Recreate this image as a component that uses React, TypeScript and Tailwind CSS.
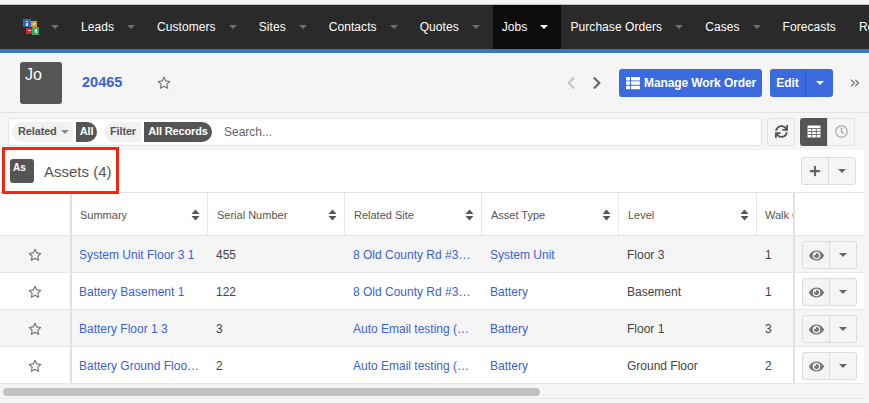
// Work order detail page: top nav, record header, related list toolbar and the Assets table.
import type { ReactNode } from 'react';
import { ChevronsRight } from 'lucide-react';
import { FaChevronLeft, FaChevronRight, FaEye, FaPlus, FaRegClock, FaSync, FaThList } from 'react-icons/fa';

const gridCols = 'grid grid-cols-[72px_136px_137px_137px_137px_138px_36px_71px]';
const linkClass = 'truncate text-[#3b62d8]';

const navItems = [
  { label: 'Leads' },
  { label: 'Customers' },
  { label: 'Sites' },
  { label: 'Contacts' },
  { label: 'Quotes' },
  { label: 'Jobs', active: true },
  { label: 'Purchase Orders' },
  { label: 'Cases' },
];

const headers = ['Summary', 'Serial Number', 'Related Site', 'Asset Type', 'Level'];

const rows = [
  { summary: 'System Unit Floor 3 1', serial: '455', site: '8 Old County Rd #3…', type: 'System Unit', level: 'Floor 3', walk: '1' },
  { summary: 'Battery Basement 1', serial: '122', site: '8 Old County Rd #3…', type: 'Battery', level: 'Basement', walk: '1' },
  { summary: 'Battery Floor 1 3', serial: '3', site: 'Auto Email testing (…', type: 'Battery', level: 'Floor 1', walk: '3' },
  { summary: 'Battery Ground Floo…', serial: '2', site: 'Auto Email testing (…', type: 'Battery', level: 'Ground Floor', walk: '2' },
];

function Caret({ className = 'border-t-[#6f6f6f]' }: { className?: string }) {
  return <span className={`h-0 w-0 shrink-0 border-x-[4px] border-t-[4px] border-x-transparent ${className}`} />;
}

function SortIcon() {
  return (
    <svg width="9" height="12" viewBox="0 0 9 12" className="shrink-0">
      <path d="M4.5 0.5 L8.5 5 H0.5 Z M0.5 7 H8.5 L4.5 11.5 Z" fill="#555" />
    </svg>
  );
}

function StarIcon({ className }: { className?: string }) {
  return (
    <svg width="14" height="14" viewBox="0 0 14 14" className={`shrink-0 ${className ?? ''}`}>
      <path
        d="M7 1.2 L8.75 4.9 L12.8 5.45 L9.85 8.25 L10.6 12.3 L7 10.35 L3.4 12.3 L4.15 8.25 L1.2 5.45 L5.25 4.9 Z"
        fill="none"
        stroke="#707070"
        strokeWidth="1.1"
        strokeLinejoin="round"
      />
    </svg>
  );
}

function GridIcon() {
  return (
    <svg width="14" height="13" viewBox="0 0 14 13">
      <rect x="0.5" y="0.5" width="13" height="12" rx="1" fill="#fff" />
      <path d="M4.7 3.5 V12.5 M9.3 3.5 V12.5 M0.5 3.5 H13.5 M0.5 6.5 H13.5 M0.5 9.5 H13.5" stroke="#555" strokeWidth="0.8" />
    </svg>
  );
}

function Logo() {
  return (
    <svg width="16" height="16" viewBox="0 0 16 16" className="shrink-0">
      <rect x="0" y="0" width="8" height="8" fill="#3569ad" />
      <rect x="3" y="2" width="2" height="1" fill="#cfe0f2" />
      <rect x="3" y="4" width="2" height="3" fill="#cfe0f2" />
      <rect x="8" y="2" width="6" height="6" fill="#d99a35" />
      <rect x="10" y="4" width="2" height="2" fill="#f3d9a8" />
      <rect x="3" y="9" width="6" height="6" fill="#c92a2f" />
      <rect x="5" y="11" width="3" height="1" fill="#f2c6c7" />
      <rect x="9" y="8" width="7" height="8" fill="#45a565" />
      <rect x="12" y="10" width="2" height="4" fill="#c9e8d4" />
    </svg>
  );
}

function NavItem({ label, active }: { label: string; active?: boolean }) {
  return (
    <div className={`flex h-full shrink-0 items-center gap-[13px] pl-[9px] pr-[13px] ${active ? 'bg-[#0c0c0c]' : ''}`}>
      <span>{label}</span>
      <Caret className={active ? 'border-t-white' : 'border-t-[#6f6f6f]'} />
    </div>
  );
}

function SplitButton({ children }: { children: ReactNode }) {
  return (
    <div className="flex h-[28px] w-[55px] rounded-[3px] border border-[#dcdcdc] bg-[#f5f5f5]">
      <div className="flex w-[27px] items-center justify-center border-r border-[#dcdcdc]">{children}</div>
      <div className="flex flex-1 items-center justify-center">
        <Caret className="border-t-[#666]" />
      </div>
    </div>
  );
}

function Pill({ label, value, caret, labelWidth, valueWidth }: { label: string; value: string; caret?: boolean; labelWidth: string; valueWidth: string }) {
  return (
    <div className="flex h-[20px] items-center gap-[3px] text-[11px] font-bold tracking-[-0.15px]">
      <div className={`flex h-full items-center gap-[4px] rounded-l-[10px] bg-[#f1f1f1] pl-[6px] text-[#555] ${labelWidth}`}>
        {label}
        {caret && <Caret className="border-t-[#888]" />}
      </div>
      <div className={`flex h-full items-center justify-center rounded-r-[10px] bg-[#555] text-white ${valueWidth}`}>{value}</div>
    </div>
  );
}

export default function App() {
  return (
    <div className="h-[403px] w-[869px] overflow-hidden bg-[#f5f5f5] font-['Liberation_Sans',sans-serif] text-[12px] text-[#444]">
      <div className="h-[5px] border-b border-[#c4c4c4] bg-[#f5f5f5]" />

      <nav className="flex h-[44px] items-center overflow-hidden bg-[#2a2a2a] pl-[14px] text-[12px] tracking-[0.07px] text-white">
        <div className="flex h-full shrink-0 items-center gap-[12px] pl-[9px] pr-[13px]">
          <Logo />
          <Caret />
        </div>
        {navItems.map((item) => (
          <NavItem key={item.label} label={item.label} active={item.active} />
        ))}
        <span className="ml-[9px] shrink-0">Forecasts</span>
        <span className="ml-[23px] shrink-0">Related</span>
      </nav>
      <div className="h-[4px] bg-[#3a75bd]" />

      <header className="flex h-[60px] items-center border-b border-[#e2e2e2] pl-[20px] pr-[7px]">
        <div className="h-[42px] w-[42px] rounded-[3px] bg-[#555] pl-[5px] pt-[3px] text-[16px] leading-[20px] text-white">Jo</div>
        <span className="ml-[20px] text-[14.5px] font-bold text-[#3b62d8]">20465</span>
        <StarIcon className="ml-[35px]" />
        <div className="ml-auto flex items-center">
          <FaChevronLeft size={14} className="text-[#c4c4c4]" />
          <FaChevronRight size={14} className="ml-[12px] text-[#666]" />
          <button className="ml-[15px] flex h-[28px] w-[143px] items-center gap-[4px] rounded-[3px] bg-[#3a6ade] pl-[7px] text-[12px] font-bold tracking-[-0.1px] text-white">
            <FaThList size={14} />
            Manage Work Order
          </button>
          <div className="ml-[8px] flex h-[28px] w-[63px] rounded-[3px] bg-[#3a6ade] text-[12px] font-bold text-white">
            <span className="flex w-[36px] items-center justify-center border-r border-[#2f58ba]">Edit</span>
            <span className="flex flex-1 items-center justify-center">
              <Caret className="border-t-white" />
            </span>
          </div>
          <ChevronsRight size={14} strokeWidth={2} className="ml-[15px] text-[#6a6a6a]" />
        </div>
      </header>

      <div className="flex h-[37px] items-center pl-[8px] pr-[13px]">
        <div className="flex h-[28px] w-[754px] items-center rounded-[3px] border border-[#e2e2e2] bg-white pl-[3px]">
          <Pill label="Related" value="All" caret labelWidth="w-[61px]" valueWidth="w-[21px]" />
          <div className="ml-[7px]">
            <Pill label="Filter" value="All Records" labelWidth="w-[37px]" valueWidth="w-[68px]" />
          </div>
          <span className="ml-[12px] text-[12px] text-[#666]">Search...</span>
        </div>
        <div className="ml-[5px] flex h-[28px] w-[28px] items-center justify-center rounded-[3px] border border-[#e2e2e2] bg-[#f5f5f5]">
          <FaSync size={13} className="text-[#555]" />
        </div>
        <div className="ml-[5px] flex h-[28px] w-[55px]">
          <div className="flex w-[27px] items-center justify-center rounded-l-[3px] bg-[#555]">
            <GridIcon />
          </div>
          <div className="flex flex-1 items-center justify-center rounded-r-[3px] border border-[#e2e2e2]">
            <FaRegClock size={13} className="text-[#aaa]" />
          </div>
        </div>
      </div>

      <div className="relative w-[864px] bg-white">
        <div className="flex h-[42px] items-center pl-[10px] pr-[8px]">
          <div className="h-[24px] w-[24px] rounded-[3px] bg-[#555] pl-[3px] pt-[1px] text-[10px] font-bold text-white">As</div>
          <span className="ml-[10px] pt-[2px] text-[15px] text-[#555]">Assets (4)</span>
          <div className="ml-auto">
            <SplitButton>
              <FaPlus size={12} className="text-[#666]" />
            </SplitButton>
          </div>
        </div>

        <div className={`${gridCols} h-[44px] border-y border-[#e4e4e4] text-[11px] text-[#555]`}>
          <div className="border-r-2 border-[#e0e0e0]" />
          {headers.map((h, i) => (
            <div key={h} className={`flex items-center justify-between border-r border-[#e8e8e8] pr-[7px] pt-[2px] ${i === 0 ? 'pl-[8px]' : 'pl-[9px]'}`}>
              <span>{h}</span>
              <SortIcon />
            </div>
          ))}
          <div className="overflow-hidden whitespace-nowrap pl-[8px] pt-[1px] leading-[42px]">Walk Order</div>
          <div className="border-l-2 border-[#e0e0e0]" />
        </div>

        {rows.map((row, i) => (
          <div key={row.summary} className={`${gridCols} h-[37px] items-stretch border-b border-[#e8e8e8] ${i % 2 === 0 ? 'bg-[#f5f5f5]' : 'bg-white'}`}>
            <div className="flex items-center justify-center border-r-2 border-[#e0e0e0] pt-[2px]">
              <StarIcon />
            </div>
            <div className="flex items-center overflow-hidden pl-[7px] pt-[2px]"><span className={linkClass}>{row.summary}</span></div>
            <div className="flex items-center pl-[8px] pt-[2px]">{row.serial}</div>
            <div className="flex items-center overflow-hidden pl-[8px] pt-[2px]"><span className={linkClass}>{row.site}</span></div>
            <div className="flex items-center pl-[8px] pt-[2px]"><span className={linkClass}>{row.type}</span></div>
            <div className="flex items-center pl-[8px] pt-[2px]">{row.level}</div>
            <div className="flex items-center pl-[8px] pt-[2px]">{row.walk}</div>
            <div className="flex items-center justify-center border-l-2 border-[#e0e0e0] pt-[2px]">
              <SplitButton>
                <FaEye size={15} className="text-[#777]" />
              </SplitButton>
            </div>
          </div>
        ))}

        <div className="absolute left-[2px] top-[-3px] h-[47px] w-[117px] border-[3px] border-[#f5260f]" />
      </div>

      <div className="flex h-[15px] w-[864px] items-center border-b border-[#e8e8e8] pl-[3px] pt-[2px]">
        <div className="h-[8px] w-[537px] rounded-full bg-[#c1c1c1]" />
      </div>
    </div>
  );
}
